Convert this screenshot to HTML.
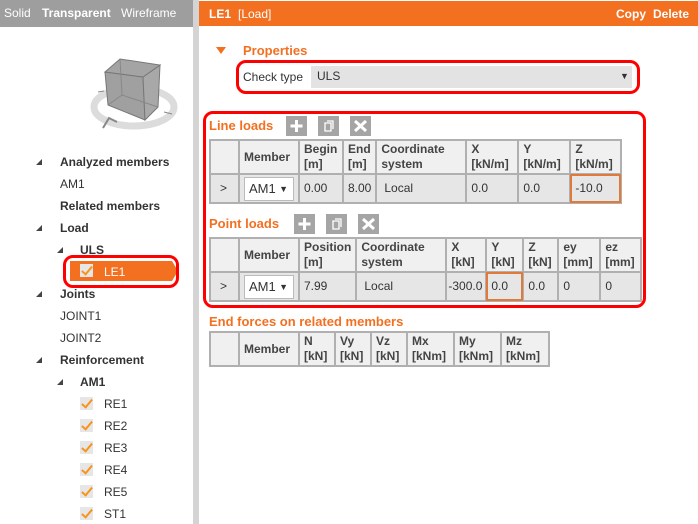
<!DOCTYPE html>
<html><head><meta charset="utf-8"><style>
*{margin:0;padding:0;box-sizing:border-box}
body{width:698px;height:524px;overflow:hidden;background:#fff;font-family:"Liberation Sans",sans-serif;font-size:12px;color:#333;position:relative}
.a{position:absolute;white-space:nowrap}
.b{font-weight:bold}
.or{color:#f37021}
.tri{position:absolute;width:0;height:0;border-left:6px solid transparent;border-bottom:6px solid #444}
.cb{position:absolute;width:13px;height:13px;background:#e6e6e6}
.cb:after{content:"";position:absolute;left:4px;top:0px;width:4px;height:9px;border-right:2.5px solid #f7941d;border-bottom:2.5px solid #f7941d;transform:rotate(40deg)}
table{position:absolute;border-collapse:collapse;font-size:12px}
td{border:2px solid #b0b0b0;padding:1px 4px;vertical-align:top;line-height:15px;color:#333}
tr.h td{background:#f0f0f0;font-weight:bold;height:34px;color:#444}
tr.d td{background:#e6e6e6;height:29px;vertical-align:middle}
.sel{background:#fff;border:1px solid #bbb;width:50px;height:24px;line-height:22px;padding-left:4px;position:relative;font-size:13px}
.sel:after{content:"▼";position:absolute;right:5px;top:0;font-size:9px}
.btn{position:absolute;width:21px;height:20px;background:#a5a5a5}
.red{position:absolute;border:3px solid #f00;border-radius:10px}
</style></head><body>
<!-- left -->
<div class="a" style="left:0;top:0;width:193px;height:27px;background:#9e9e9e"></div>
<div class="a" style="left:4px;top:6px;color:#fff;font-size:12px">Solid</div>
<div class="a b" style="left:42px;top:6px;color:#fff">Transparent</div>
<div class="a" style="left:121px;top:6px;color:#fff">Wireframe</div>
<div class="a" style="left:193px;top:0;width:6px;height:524px;background:#d4d4d4"></div>
<svg class="a" style="left:90px;top:50px" width="90" height="85" viewBox="90 50 90 85">
<ellipse cx="134" cy="107" rx="40" ry="19" fill="none" stroke="#dcdcdc" stroke-width="7"/>
<polygon points="105,72 143,77 145,120 108,105" fill="#a0a0a0" stroke="#777"/>
<polygon points="143,77 160,65 158,107 145,120" fill="#a8a8a8" stroke="#777"/>
<polygon points="105,72 120,59 160,65 143,77" fill="#a4a4a4" stroke="#777"/>
<polyline points="120,59 122,95 108,105" fill="none" stroke="#888"/>
<line x1="122" y1="95" x2="158" y2="107" stroke="#888"/>
<line x1="98" y1="92" x2="104" y2="91" stroke="#888"/>
<line x1="164" y1="112" x2="172" y2="114" stroke="#888"/>
<path d="M103 128 L109 118 L117 122" fill="none" stroke="#888" stroke-width="2"/>
</svg>
<div class="tri" style="left:36px;top:159px"></div><div class="a b" style="left:60px;top:155px">Analyzed members</div>
<div class="a" style="left:60px;top:177px">AM1</div>
<div class="a b" style="left:60px;top:199px">Related members</div>
<div class="tri" style="left:36px;top:225px"></div><div class="a b" style="left:60px;top:221px">Load</div>
<div class="tri" style="left:57px;top:247px"></div><div class="a b" style="left:80px;top:243px">ULS</div>
<div class="a" style="left:70px;top:261px;width:102px;height:20px;background:#f37021"></div>
<div class="a" style="left:172px;top:261px;width:0;height:0;border-top:10px solid transparent;border-bottom:10px solid transparent;border-left:6px solid #f37021"></div>
<div class="cb" style="left:80px;top:264px"></div>
<div class="a" style="left:104px;top:265px;color:#fff">LE1</div>
<div class="red" style="left:63px;top:255px;width:116px;height:33px"></div>
<div class="tri" style="left:36px;top:291px"></div><div class="a b" style="left:60px;top:287px">Joints</div>
<div class="a" style="left:60px;top:309px">JOINT1</div>
<div class="a" style="left:60px;top:331px">JOINT2</div>
<div class="tri" style="left:36px;top:357px"></div><div class="a b" style="left:60px;top:353px">Reinforcement</div>
<div class="tri" style="left:57px;top:379px"></div><div class="a b" style="left:80px;top:375px">AM1</div>
<div class="cb" style="left:80px;top:397px"></div><div class="a" style="left:104px;top:397px">RE1</div>
<div class="cb" style="left:80px;top:419px"></div><div class="a" style="left:104px;top:419px">RE2</div>
<div class="cb" style="left:80px;top:441px"></div><div class="a" style="left:104px;top:441px">RE3</div>
<div class="cb" style="left:80px;top:463px"></div><div class="a" style="left:104px;top:463px">RE4</div>
<div class="cb" style="left:80px;top:485px"></div><div class="a" style="left:104px;top:485px">RE5</div>
<div class="cb" style="left:80px;top:507px"></div><div class="a" style="left:104px;top:507px">ST1</div>
<!-- right -->
<div class="a" style="left:199px;top:1px;width:499px;height:25px;background:#f37021"></div>
<div class="a b" style="left:209px;top:7px;color:#fff">LE1</div>
<div class="a" style="left:238px;top:7px;color:#fff">[Load]</div>
<div class="a b" style="left:616px;top:7px;color:#fff">Copy</div>
<div class="a b" style="left:653px;top:7px;color:#fff">Delete</div>
<div class="a" style="left:216px;top:47px;width:0;height:0;border-left:5px solid transparent;border-right:5px solid transparent;border-top:7px solid #f37021"></div>
<div class="a b or" style="left:243px;top:43px;font-size:13px">Properties</div>
<div class="a" style="left:243px;top:70px">Check type</div>
<div class="a" style="left:311px;top:66px;width:321px;height:22px;background:#e3e3e3"></div>
<div class="a" style="left:317px;top:69px">ULS</div>
<div class="a" style="left:620px;top:71px;font-size:9px">▼</div>
<div class="red" style="left:236px;top:60px;width:404px;height:34px"></div>

<div class="red" style="left:203px;top:111px;width:443px;height:197px"></div>
<div class="a b or" style="left:209px;top:118px;font-size:13px">Line loads</div>
<svg class="a" style="left:286px;top:116px" width="90" height="20">
<rect width="21" height="20" fill="#a5a5a5"/><path d="M10.5 4v12M4.5 10h12" stroke="#fff" stroke-width="3"/>
<rect x="32" width="21" height="20" fill="#a5a5a5"/><path d="M39 7h6v8h-6z M41 5h6v8" fill="none" stroke="#fff" stroke-width="1.3"/>
<rect x="64" width="21" height="20" fill="#a5a5a5"/><path d="M69 5l11 10M80 5l-11 10" stroke="#fff" stroke-width="3"/>
</svg>
<table style="left:209px;top:139px;width:413px">
<tr class="h"><td style="width:29px"></td><td style="width:60px;vertical-align:middle">Member</td><td style="width:44px">Begin<br>[m]</td><td style="width:32px">End<br>[m]</td><td style="width:90px">Coordinate<br>system</td><td style="width:52px">X<br>[kN/m]</td><td style="width:52px">Y<br>[kN/m]</td><td>Z<br>[kN/m]</td></tr>
<tr class="d"><td style="padding-left:9px">&gt;</td><td><div class="sel">AM1</div></td><td>0.00</td><td>8.00</td><td style="padding-left:7px">Local</td><td>0.0</td><td>0.0</td><td style="outline:2px solid #e07a3a;outline-offset:-2px">-10.0</td></tr>
</table>
<div class="a b or" style="left:209px;top:216px;font-size:13px">Point loads</div>
<svg class="a" style="left:294px;top:214px" width="90" height="20">
<rect width="21" height="20" fill="#a5a5a5"/><path d="M10.5 4v12M4.5 10h12" stroke="#fff" stroke-width="3"/>
<rect x="32" width="21" height="20" fill="#a5a5a5"/><path d="M39 7h6v8h-6z M41 5h6v8" fill="none" stroke="#fff" stroke-width="1.3"/>
<rect x="64" width="21" height="20" fill="#a5a5a5"/><path d="M69 5l11 10M80 5l-11 10" stroke="#fff" stroke-width="3"/>
</svg>
<table style="left:209px;top:237px;width:433px">
<tr class="h"><td style="width:29px"></td><td style="width:60px;vertical-align:middle">Member</td><td style="width:56px">Position<br>[m]</td><td style="width:90px">Coordinate<br>system</td><td style="width:40px">X<br>[kN]</td><td style="width:37px">Y<br>[kN]</td><td style="width:35px">Z<br>[kN]</td><td style="width:42px">ey<br>[mm]</td><td>ez<br>[mm]</td></tr>
<tr class="d"><td style="padding-left:9px">&gt;</td><td><div class="sel">AM1</div></td><td>7.99</td><td style="padding-left:7px">Local</td><td style="padding:1px 1px">-300.0</td><td style="outline:2px solid #e07a3a;outline-offset:-2px">0.0</td><td>0.0</td><td>0</td><td>0</td></tr>
</table>
<div class="a b or" style="left:209px;top:314px;font-size:13px">End forces on related members</div>
<table style="left:209px;top:331px;width:341px">
<tr class="h"><td style="width:29px"></td><td style="width:60px;vertical-align:middle">Member</td><td style="width:36px">N<br>[kN]</td><td style="width:36px">Vy<br>[kN]</td><td style="width:36px">Vz<br>[kN]</td><td style="width:47px">Mx<br>[kNm]</td><td style="width:47px">My<br>[kNm]</td><td>Mz<br>[kNm]</td></tr>
</table>
</body></html>
